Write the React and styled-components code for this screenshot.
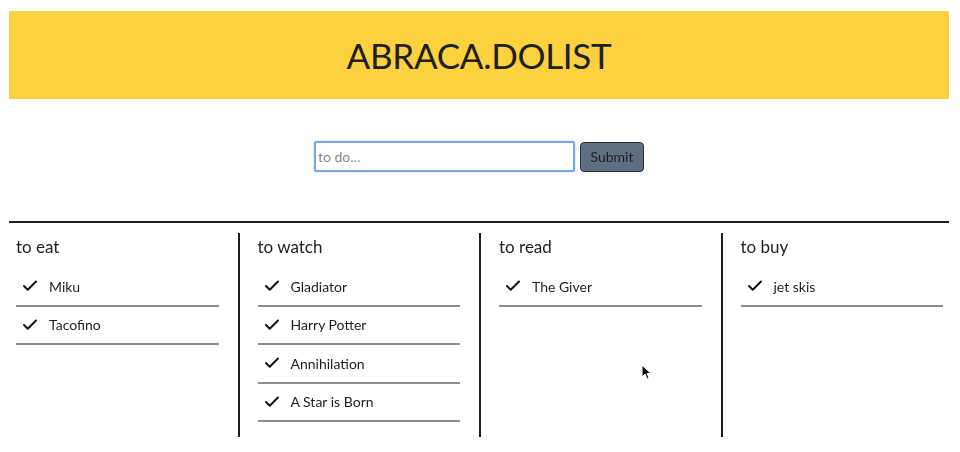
import React from 'react'
import styled, {createGlobalStyle} from 'styled-components'
import {Check} from 'lucide-react'

const Global = createGlobalStyle`
  html, body {
    margin: 0;
    padding: 0;
    background: #fff;
  }
  body {
    font-family: Lato, "Noto Sans", sans-serif;
    color: #1d1d1d;
  }
`

const Pagina = styled.div`
  position: relative;
  padding: 11px 11px 0 9px;
  height: 452px;
  box-sizing: border-box;
  overflow: hidden;
`

const Cabecalho = styled.header`
  height: 88px;
  background: #fbd13f;
  display: flex;
  align-items: center;
  justify-content: center;
`

const Titulo = styled.h1`
  margin: 0;
  font-size: 35px;
  font-weight: 400;
  letter-spacing: -0.3px;
  color: #202020;
`

const Formulario = styled.form`
  display: flex;
  justify-content: center;
  align-items: center;
  gap: 5px;
  margin: 42px 0 49px 0;
`

const Entrada = styled.input`
  box-sizing: border-box;
  width: 261px;
  height: 31px;
  border: 2px solid #79a6e9;
  border-radius: 2px;
  box-shadow: 0 0 2px #a9c8f3;
  padding: 0 2px;
  font-family: Lato, sans-serif;
  font-size: 14px;
  outline: none;
  &::placeholder {
    color: #8a8a8a;
  }
`

const Botao = styled.button`
  box-sizing: border-box;
  width: 64px;
  height: 30px;
  background: #5f6f82;
  border: 1px solid #2e3338;
  border-radius: 4px;
  font-family: Lato, sans-serif;
  font-size: 14px;
  color: #1e1e1e;
`

const Quadro = styled.section`
  border-top: 2px solid #1e1e1e;
  display: flex;
  padding: 10px 6px 0 7px;
`

const Coluna = styled.div`
  flex: 1 1 0;
  height: 204px;
  padding: 0 ${p => (p.$ultima ? 0 : 19)}px 0 ${p => (p.$primeira ? 0 : 18)}px;
  border-left: ${p => (p.$primeira ? 'none' : '2px solid #1e1e1e')};
`

const NomeColuna = styled.h2`
  margin: 3px 0 10px;
  font-size: 17px;
  font-weight: 400;
  line-height: 22px;
  color: #1d1d1d;
`

const Lista = styled.ul`
  list-style: none;
  margin: 0;
  padding: 0;
`

const Item = styled.li`
  display: flex;
  align-items: center;
  gap: 10px;
  height: 36.5px;
  padding-left: 5px;
  border-bottom: 2px solid #8d8d8d;
  font-size: 14px;
  color: #1d1d1d;
`

const Cursor = styled.svg`
  position: absolute;
  left: 641px;
  top: 364px;
`

const listas = [
  {nome: 'to eat', itens: ['Miku', 'Tacofino']},
  {nome: 'to watch', itens: ['Gladiator', 'Harry Potter', 'Annihilation', 'A Star is Born']},
  {nome: 'to read', itens: ['The Giver']},
  {nome: 'to buy', itens: ['jet skis']},
]

const App = () => {
  return (
    <Pagina>
      <Global />
      <Cabecalho>
        <Titulo>ABRACA.DOLIST</Titulo>
      </Cabecalho>
      <Formulario onSubmit={e => e.preventDefault()}>
        <Entrada placeholder="to do..." autoFocus />
        <Botao type="submit">Submit</Botao>
      </Formulario>
      <Quadro>
        {listas.map((lista, i) => (
          <Coluna key={lista.nome} $primeira={i === 0} $ultima={i === listas.length - 1}>
            <NomeColuna>{lista.nome}</NomeColuna>
            <Lista>
              {lista.itens.map(item => (
                <Item key={item}>
                  <Check size={18} strokeWidth={2.6} color="#111" />
                  {item}
                </Item>
              ))}
            </Lista>
          </Coluna>
        ))}
      </Quadro>
      <Cursor width="11" height="16" viewBox="0 0 11 16">
        <path d="M1 1 L1 13 L4 10 L6 15 L8 14 L6 9.5 L10 9.5 Z" fill="#111" stroke="#fff" strokeWidth="1" />
      </Cursor>
    </Pagina>
  )
}

export default App
